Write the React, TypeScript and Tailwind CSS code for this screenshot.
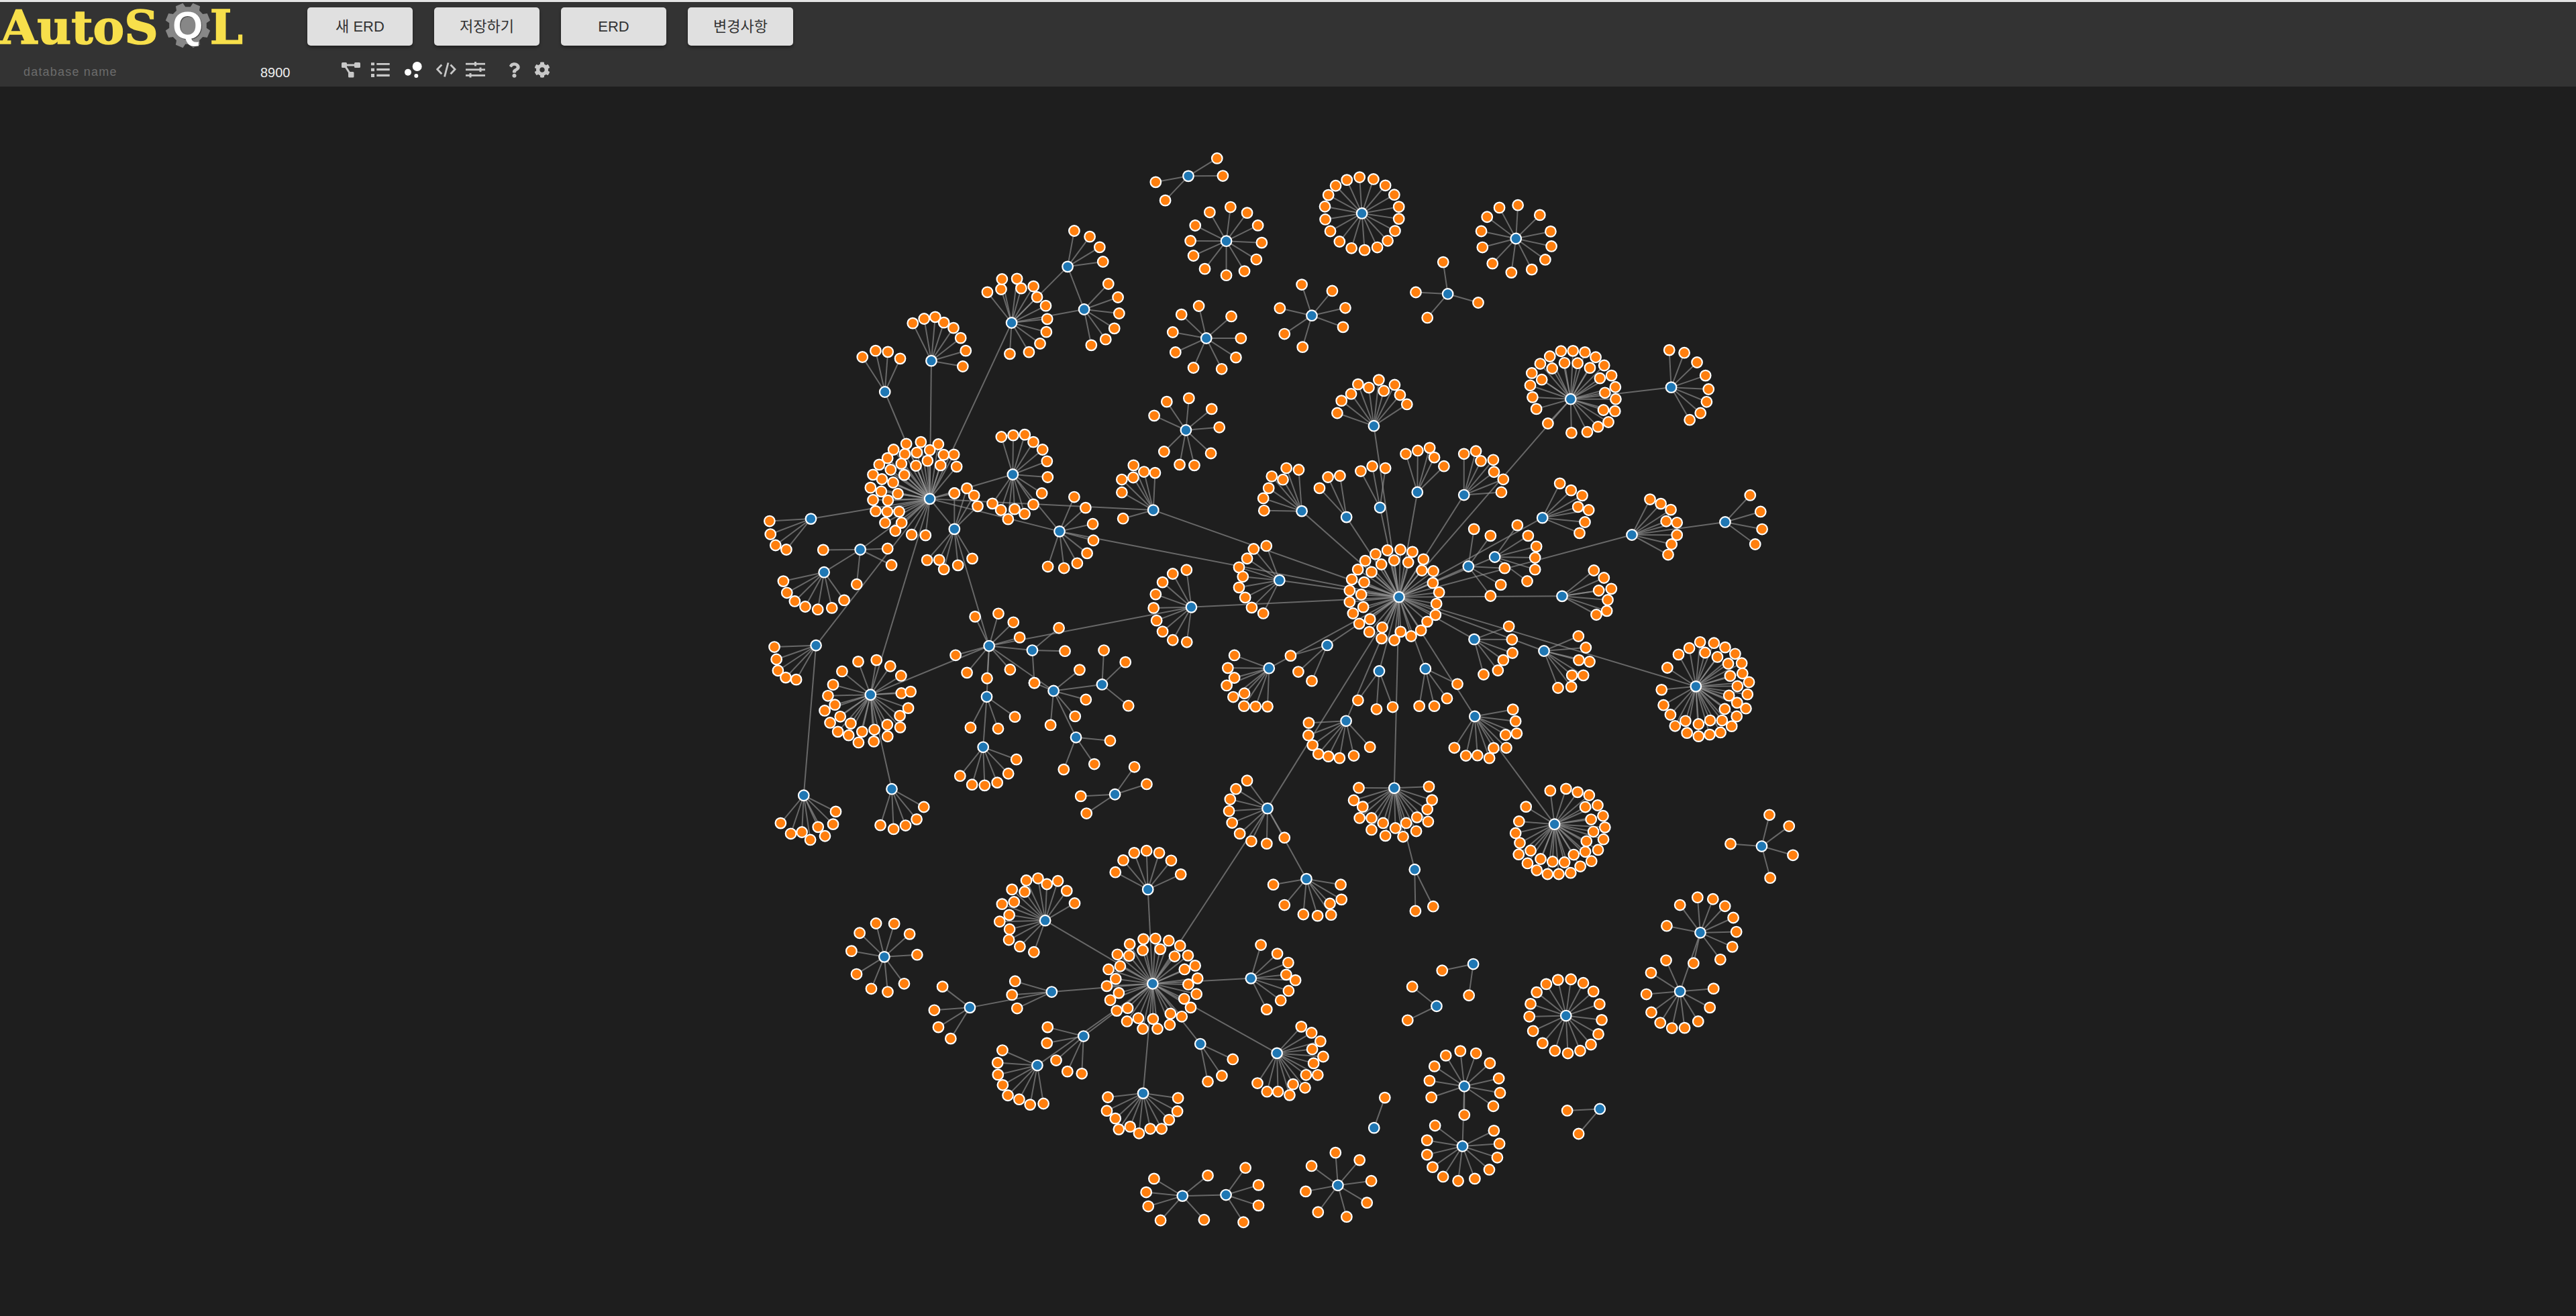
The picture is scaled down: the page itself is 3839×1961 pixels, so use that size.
import { FaCog, FaQuestion } from 'react-icons/fa';

type Pt = [number, number];

interface Hub {
  id: string;
  at: Pt;
  leaves: Pt[];
}

// crop frames: left, top, x scale, y scale
const frame = (ox: number, oy: number, sx: number, sy: number) => (x: number, y: number): Pt => [ox + x / sx, oy + y / sy];
type Frame = ReturnType<typeof frame>;

const A = frame(1100, 200, 2.24, 3);
const B = frame(1800, 200, 1.742, 2.45);
const C = frame(1100, 700, 2.24, 2.613);
const D = frame(1800, 840, 1.742, 2.8);
const E = frame(1200, 1240, 1.96, 2.529);
const F = frame(2000, 1200, 2.178, 2.376);
const G = frame(1270, 630, 3, 3);
const H = frame(1950, 790, 3, 3);
const I = frame(2120, 700, 3, 3);

const pts = (f: Frame, ...n: number[]): Pt[] => {
  const out: Pt[] = [];
  for (let i = 0; i < n.length; i += 2) out.push(f(n[i], n[i + 1]));
  return out;
};

const hubs: Hub[] = [
  { id: 'a1', at: A(1503, 187), leaves: [...pts(A, 1394, 214, 1426, 296), ...pts(B, 24, 88, 39, 152)] },
  { id: 'a2', at: A(1100, 592), leaves: pts(A, 1122, 432, 1174, 458, 1207, 505, 1218, 570) },
  { id: 'a3', at: A(913, 843), leaves: pts(A, 832, 706, 878, 693, 881, 648, 931, 646, 945, 689, 986, 680, 998, 728, 1027, 767, 1032, 826, 1029, 884, 1008, 936, 971, 974, 907, 982) },
  { id: 'a4', at: A(1155, 783), leaves: pts(A, 1236, 669, 1268, 729, 1272, 801, 1256, 868, 1227, 917, 1179, 943) },
  { id: 'a5', at: A(645, 1013), leaves: pts(A, 583, 845, 621, 825, 658, 817, 687, 842, 719, 866, 743, 911, 760, 968, 750, 1038) },
  { id: 'a6', at: A(490, 1152), leaves: pts(A, 415, 996, 459, 968, 500, 973, 541, 1003) },
  { id: 'a7', at: A(1563, 912), leaves: [...pts(A, 1480, 806, 1538, 768, 1451, 885, 1460, 975, 1520, 1044), ...pts(B, 61, 665, 86, 745, 73, 815, 36, 857)] },
  { id: 'a8', at: A(1495, 1323), leaves: [...pts(A, 1389, 1258, 1431, 1196, 1505, 1180, 1422, 1419, 1474, 1477, 1523, 1480), ...pts(B, 10, 1003, 30, 1070, 8, 1165)] },
  { id: 'a9', at: B(48, 390), leaves: [...pts(A, 1526, 408, 1510, 477, 1520, 543, 1558, 602), ...pts(B, 5, 285, 59, 266, 102, 287, 130, 333, 140, 396, 126, 457, 95, 500, 48, 515)] },

  { id: 'b1', at: B(400, 289), leaves: pts(B, 394, 157, 430, 164, 461, 187, 484, 221, 496, 265, 496, 309, 486, 353, 467, 389, 440, 413, 407, 423, 373, 416, 342, 392, 318, 354, 305, 311, 304, 264, 313, 222, 332, 188, 361, 167) },
  { id: 'b2', at: B(800, 381), leaves: pts(B, 805, 259, 862, 295, 890, 355, 892, 409, 876, 458, 841, 494, 788, 505, 739, 472, 713, 413, 710, 354, 725, 302, 757, 268) },
  { id: 'b3', at: B(270, 662), leaves: pts(B, 244, 549, 323, 572, 357, 634, 351, 704, 246, 777, 199, 729, 187, 635) },
  { id: 'b4', at: B(623, 583), leaves: pts(B, 611, 467, 540, 577, 702, 615, 570, 670) },
  { id: 'b5', at: B(942, 967), leaves: pts(B, 917, 792, 948, 791, 979, 796, 1007, 814, 1029, 844, 1048, 881, 1058, 923, 1059, 967, 1057, 1011, 1040, 1051, 1013, 1068, 985, 1087, 944, 1090, 883, 1056, 853, 1003, 843, 960, 837, 917, 841, 872, 863, 838, 888, 811, 926, 835, 960, 836, 992, 853, 1018, 891, 1031, 944, 1027, 1007, 894, 855, 867, 896) },
  { id: 'b6', at: B(1203, 924), leaves: pts(B, 1198, 788, 1237, 798, 1270, 833, 1292, 881, 1300, 931, 1295, 977, 1279, 1018, 1251, 1043) },
  { id: 'b7', at: B(431, 1065), leaves: pts(B, 336, 1018, 347, 973, 372, 948, 390, 913, 418, 925, 444, 897, 457, 937, 485, 915, 499, 952, 517, 986) },
  { id: 'b8', at: B(244, 1376), leaves: pts(B, 146, 1374, 144, 1329, 158, 1292, 166, 1249, 195, 1261, 204, 1219, 236, 1225) },
  { id: 'b9', at: B(360, 1398), leaves: pts(B, 290, 1292, 312, 1252, 343, 1247) },
  { id: 'b10', at: B(447, 1363), leaves: pts(B, 397, 1230, 427, 1212, 461, 1219) },
  { id: 'b11', at: B(544, 1307), leaves: pts(B, 514, 1167, 545, 1155, 576, 1145, 588, 1180, 613, 1212) },
  { id: 'b12', at: B(665, 1317), leaves: pts(B, 665, 1167, 696, 1157, 709, 1193, 741, 1189, 743, 1233, 767, 1260, 762, 1307) },
  { id: 'b13', at: B(1343, 1416), leaves: pts(B, 1408, 1318, 1435, 1378, 1439, 1442, 1421, 1497) },
  { id: 'i1', at: I(536, 215), leaves: pts(I, 614, 61, 664, 92, 714, 115, 695, 166, 743, 180, 726, 234, 702, 283) },
  { id: 'i2', at: I(936, 291), leaves: pts(B, 1148, 1333, 1176, 1349, 1202, 1371, 1190, 1413, 1218, 1418, 1218, 1463, 1204, 1497, 1195, 1535) },
  { id: 'i3', at: I(205, 432), leaves: pts(I, 230, 265, 304, 295, 367, 440, 350, 514, 304, 564) },
  { id: 'i4', at: I(323, 390), leaves: pts(I, 424, 248, 472, 295, 509, 343, 503, 393, 503, 446, 468, 498) },
  { id: 'i5', at: I(624, 565), leaves: pts(I, 766, 450, 811, 483, 788, 540, 844, 532, 828, 582, 824, 631, 777, 648) },
  { id: 'i6', at: I(231, 758), leaves: pts(I, 386, 700, 400, 759, 402, 819, 361, 851, 337, 897, 273, 915) },
  { id: 'i7', at: I(543, 810), leaves: pts(I, 697, 744, 730, 795, 699, 851, 747, 858, 668, 919, 719, 919, 665, 970, 606, 975) },

  { id: 'hc', at: H(405, 299), leaves: pts(H, 300, 107, 353, 90, 411, 87, 465, 97, 514, 130, 558, 183, 556, 236, 584, 278, 572, 329, 568, 379, 531, 409, 503, 448, 459, 474, 412, 454, 384, 492, 327, 484, 330, 435, 272, 455, 275, 398, 227, 418, 199, 372, 184, 321, 184, 270, 194, 220, 221, 176, 254, 137, 326, 153, 383, 135, 446, 144, 507, 180, 282, 187, 249, 233, 236, 288, 245, 344) },

  { id: 'd2', at: D(186, 69), leaves: [...pts(B, 152, 1503, 119, 1514, 102, 1549), ...pts(D, 81, 15, 91, 54, 81, 99, 97, 141, 114, 183, 144, 207)] },
  { id: 'd3', at: D(159, 436), leaves: pts(D, 69, 382, 52, 435, 69, 476, 49, 508, 66, 556, 95, 541, 94, 594, 124, 596, 155, 596) },
  { id: 'd4', at: D(310, 340), leaves: pts(D, 215, 384, 235, 451, 270, 489) },
  { id: 'd5', at: D(445, 448), leaves: pts(D, 390, 570, 438, 607, 480, 598) },
  { id: 'd6', at: D(565, 438), leaves: pts(D, 549, 594, 588, 594, 621, 562, 648, 502) },
  { id: 'd7', at: D(359, 656), leaves: pts(D, 262, 664, 261, 716, 272, 757, 287, 794, 313, 804, 342, 811, 379, 801, 421, 765) },
  { id: 'd8', at: D(693, 637), leaves: pts(D, 792, 608, 799, 657, 802, 708, 773, 714, 775, 768, 742, 769, 731, 811, 700, 800, 670, 801, 640, 768) },
  { id: 'd9', at: D(484, 936), leaves: pts(D, 392, 935, 574, 930, 582, 986, 379, 987, 402, 1014, 570, 1025, 394, 1061, 425, 1061, 543, 1058, 572, 1076, 455, 1082, 515, 1082, 487, 1103, 425, 1110, 541, 1116, 461, 1135, 507, 1139) },
  { id: 'd10', at: D(900, 1087), leaves: pts(D, 889, 947, 930, 939, 960, 953, 990, 966, 1012, 1008, 1026, 1052, 1031, 1100, 1027, 1150, 1013, 1194, 996, 1241, 967, 1263, 942, 1290, 911, 1295, 882, 1295, 854, 1279, 830, 1250, 807, 1213, 810, 1165, 799, 1124, 808, 1075, 826, 1014, 980, 1015, 995, 1067, 1001, 1118, 983, 1158, 980, 1202, 950, 1214, 926, 1246, 895, 1243, 864, 1232, 838, 1197) },
  { id: 'd11', at: D(155, 1021), leaves: pts(D, 102, 905, 73, 940, 58, 983, 55, 1032, 63, 1081, 83, 1126, 113, 1158, 153, 1168, 199, 1143) },
  { id: 'd12', at: D(256, 1315), leaves: pts(D, 170, 1339, 345, 1339, 347, 1401, 317, 1418, 199, 1424, 248, 1463, 285, 1469, 320, 1465) },
  { id: 'd13', at: D(537, 1276), leaves: pts(D, 539, 1449, 585, 1430) },
  { id: 'd14', at: D(1267, 512), leaves: pts(D, 1278, 327, 1314, 331, 1343, 349, 1369, 376, 1386, 415, 1388, 458, 1405, 494, 1401, 545, 1397, 604, 1373, 637, 1360, 678, 1331, 704, 1303, 713, 1274, 720, 1244, 706, 1213, 677, 1201, 630, 1183, 590, 1178, 526, 1193, 434, 1222, 379, 1250, 352, 1291, 371, 1323, 389, 1351, 417, 1356, 468, 1375, 511, 1353, 550, 1374, 580, 1342, 606, 1335, 654, 1304, 654, 1274, 669, 1240, 656) },
  { id: 'd15', at: D(1438, 1179), leaves: pts(D, 1458, 1048, 1509, 1095, 1519, 1216, 1460, 1311, 1357, 1169) },

  { id: 'f1', at: F(1163, 451), leaves: pts(F, 1054, 427, 1097, 353, 1154, 326, 1204, 332, 1243, 357, 1270, 398, 1280, 448, 1267, 501, 1228, 546, 1141, 559) },
  { id: 'f2', at: F(1097, 659), leaves: pts(F, 1052, 549, 1003, 593, 988, 669, 1004, 733, 1033, 770, 1071, 789, 1112, 788, 1156, 765, 1194, 716, 1206, 649) },
  { id: 'f3', at: F(727, 745), leaves: pts(F, 701, 618, 743, 616, 783, 629, 816, 659, 836, 704, 843, 760, 832, 810, 808, 847, 773, 869, 733, 878, 691, 869, 651, 842, 620, 799, 608, 748, 612, 703, 632, 662, 663, 633) },
  { id: 'f4', at: F(426, 562), leaves: pts(F, 325, 585, 412, 673) },
  { id: 'f5', at: F(307, 711), leaves: pts(F, 228, 642, 213, 761) },
  { id: 'f6', at: F(397, 995), leaves: pts(F, 384, 870, 435, 878, 480, 913, 509, 967, 513, 1018, 491, 1065, 290, 1034, 284, 975, 300, 924, 337, 886, 397, 1096) },
  { id: 'f7', at: F(391, 1207), leaves: pts(F, 302, 1134, 276, 1186, 276, 1237, 294, 1281, 328, 1315, 377, 1330, 431, 1322, 478, 1290, 504, 1247, 511, 1198, 493, 1152) },
  { id: 'f8', at: F(837, 1075), leaves: pts(F, 731, 1081, 768, 1163) },
  { id: 'f9', at: F(104, 1142), leaves: pts(F, 139, 1035) },

  { id: 'e0', at: E(1015, 571), leaves: pts(E, 988, 403, 1023, 401, 1062, 409, 1095, 428, 1118, 465, 1139, 503, 1146, 551, 1143, 610, 1126, 661, 1100, 695, 1065, 726, 1029, 741, 986, 741, 940, 713, 910, 673, 891, 633, 881, 580, 886, 517, 912, 461, 948, 422, 986, 445, 1037, 441, 1079, 468, 1108, 517, 1119, 574, 1107, 628, 1067, 684, 1016, 704, 973, 701, 942, 663, 916, 606, 907, 553, 920, 505, 946, 466) },
  { id: 'e1', at: E(1001, 216), leaves: pts(E, 906, 151, 929, 106, 961, 78, 997, 70, 1034, 78, 1069, 107, 1097, 159) },
  { id: 'e2', at: E(701, 333), leaves: pts(E, 787, 268, 764, 221, 738, 184, 706, 196, 680, 174, 646, 182, 641, 225, 604, 216, 610, 263, 575, 271, 596, 312, 568, 337, 597, 366, 595, 406, 627, 431, 668, 452) },
  { id: 'e3', at: E(231, 470), leaves: pts(E, 207, 344, 260, 345, 305, 384, 327, 462, 289, 571, 241, 602, 193, 590, 150, 535, 135, 448, 159, 380) },
  { id: 'e4', at: E(720, 602), leaves: pts(E, 613, 562, 604, 613, 619, 664) },
  { id: 'e5', at: E(481, 661), leaves: pts(E, 401, 582, 377, 671, 389, 735, 425, 778) },
  { id: 'e6', at: E(813, 769), leaves: pts(E, 708, 735, 706, 795, 733, 860, 766, 902, 808, 910) },
  { id: 'e7', at: E(678, 879), leaves: pts(E, 576, 822, 562, 869, 563, 914, 577, 953, 592, 992, 625, 1007, 657, 1027, 696, 1023) },
  { id: 'e8', at: E(1154, 798), leaves: pts(E, 1249, 856, 1217, 918, 1176, 940) },
  { id: 'e9', at: E(987, 984), leaves: pts(E, 884, 999, 1089, 1002, 1087, 1052, 881, 1050, 906, 1079, 1063, 1084, 916, 1120, 949, 1110, 1041, 1118, 1008, 1118, 975, 1135) },
  { id: 'e10', at: E(1302, 551), leaves: pts(E, 1331, 425, 1379, 458, 1411, 492, 1405, 537, 1432, 558, 1412, 598, 1389, 634, 1348, 668) },
  { id: 'e11', at: E(1378, 833), leaves: pts(E, 1449, 733, 1479, 756, 1505, 788, 1481, 818, 1513, 846, 1485, 871, 1463, 915, 1497, 915, 1460, 963, 1425, 950, 1415, 991, 1381, 978, 1349, 978, 1321, 946) },
  { id: 'e12', at: E(1102, 1371), leaves: pts(E, 1019, 1306, 996, 1357, 1002, 1410, 1038, 1463, 1165, 1461, 1176, 1294) },
  { id: 'e13', at: E(1229, 1367), leaves: pts(E, 1286, 1265, 1324, 1330, 1324, 1407, 1280, 1470) },
  { id: 'e14', at: E(1556, 1331), leaves: [...pts(E, 1549, 1208, 1479, 1258, 1462, 1354, 1498, 1432), ...pts(F, 57, 1256, 95, 1330, 81, 1407, 15, 1457)] },

  { id: 'g0', at: G(347, 340), leaves: pts(G, 242, 94, 307, 86, 385, 96, 455, 142, 467, 196, 409, 143, 347, 122, 289, 133, 235, 140, 185, 120, 158, 158, 121, 187, 93, 232, 82, 290, 93, 345, 105, 395, 147, 447, 193, 483, 221, 447, 210, 397, 157, 397, 160, 347, 130, 307, 133, 252, 172, 210, 220, 183, 285, 192, 337, 170, 395, 190, 233, 233, 183, 267, 204, 317, 266, 500, 328, 503, 457, 315) },
  { id: 'g1', at: G(718, 231), leaves: pts(G, 667, 63, 720, 56, 772, 53, 810, 86, 851, 120, 871, 172, 874, 243, 848, 315, 810, 365, 771, 407, 726, 386, 697, 431, 665, 390, 627, 361) },
  { id: 'g2', at: G(457, 475), leaves: pts(G, 457, 315, 513, 293, 545, 325, 561, 373, 335, 614, 389, 613, 410, 655, 473, 637, 537, 607) },

  { id: 'c1', at: C(1386, 157), leaves: [...pts(A, 1320, 1480), ...pts(C, 1319, 30, 1355, 8, 1392, 12, 1281, 38, 1281, 88, 1285, 190)] },
  { id: 'c2', at: C(1073, 240), leaves: pts(C, 1122, 106, 1160, 148, 1184, 211, 1186, 275, 1165, 325, 1132, 364, 1088, 383, 1034, 377) },
  { id: 'c3', at: C(243, 191), leaves: pts(C, 105, 200, 108, 251, 125, 294, 161, 311) },
  { id: 'c4', at: C(408, 311), leaves: pts(C, 284, 312, 499, 307, 512, 371, 396, 446) },
  { id: 'c5', at: C(287, 399), leaves: pts(C, 151, 434, 163, 479, 189, 512, 224, 533, 266, 544, 313, 538, 354, 508) },
  { id: 'c6', at: C(260, 684), leaves: pts(C, 121, 690, 128, 738, 133, 782, 159, 809, 194, 817) },
  { id: 'c7', at: C(219, 1268), leaves: pts(C, 142, 1376, 176, 1417, 213, 1411, 241, 1441, 290, 1426, 267, 1391, 317, 1380, 326, 1331) },
  { id: 'c8', at: C(442, 876), leaves: pts(C, 401, 747, 462, 741, 508, 765, 544, 802, 545, 870, 576, 864, 568, 928, 540, 958, 541, 1003, 498, 993, 499, 1038, 455, 1012, 453, 1058, 414, 1020, 402, 1062, 369, 1034, 376, 988, 333, 1020, 307, 985, 341, 961, 289, 938, 323, 915, 300, 880, 317, 837, 347, 785) },
  { id: 'c9', at: C(513, 1243), leaves: pts(C, 620, 1313, 596, 1361, 559, 1385, 519, 1399, 475, 1384) },
  { id: 'c10', at: C(838, 686), leaves: pts(C, 791, 572, 869, 560, 919, 594, 940, 653, 726, 722, 764, 790, 831, 812, 908, 778) },
  { id: 'c11', at: C(1513, 535), leaves: pts(C, 1497, 390, 1451, 405, 1417, 438, 1394, 485, 1387, 538, 1397, 587, 1417, 630, 1451, 663, 1498, 671) },
  { id: 'c12', at: C(982, 703), leaves: pts(C, 1071, 616, 1091, 706, 989, 830) },
  { id: 'c13', at: C(1053, 861), leaves: pts(C, 1140, 779, 1161, 895, 1125, 960, 1043, 994, 989, 830) },
  { id: 'c14', at: C(1215, 836), leaves: pts(C, 1221, 703, 1293, 749, 1303, 919) },
  { id: 'c15', at: C(1128, 1042), leaves: pts(C, 1242, 1055, 1189, 1146, 1087, 1167) },
  { id: 'c16', at: C(830, 884), leaves: pts(C, 924, 962, 868, 1008, 776, 1004) },
  { id: 'c17', at: C(818, 1080), leaves: pts(C, 929, 1128, 902, 1183, 865, 1218, 823, 1229, 781, 1226, 741, 1192) },
  { id: 'c18', at: C(1258, 1264), leaves: pts(C, 1323, 1157, 1364, 1224, 1144, 1271, 1163, 1338) },
];

const hubLinks: [string, string][] = [
  ['a2', 'a3'], ['a2', 'a4'], ['a3', 'a4'], ['a3', 'g0'], ['a5', 'g0'], ['a6', 'g0'],
  ['g0', 'g1'], ['g0', 'g2'], ['g0', 'c1'], ['g0', 'c2'], ['g1', 'c2'], ['g0', 'c3'], ['g0', 'c4'], ['c4', 'c5'],
  ['g0', 'c6'], ['c6', 'c7'], ['g0', 'c8'], ['c8', 'c9'], ['c8', 'c10'], ['g2', 'c10'], ['c10', 'c11'],
  ['c10', 'c12'], ['c10', 'c13'], ['c13', 'c14'], ['c13', 'c15'], ['c10', 'c16'], ['c16', 'c17'],
  ['hc', 'c1'], ['hc', 'c2'], ['hc', 'c11'], ['hc', 'b5'], ['b5', 'b6'], ['hc', 'b7'], ['hc', 'b8'], ['hc', 'b9'],
  ['hc', 'b10'], ['hc', 'b11'], ['hc', 'b12'], ['hc', 'i1'], ['hc', 'i2'], ['i2', 'b13'], ['hc', 'i3'], ['hc', 'i4'],
  ['hc', 'i5'], ['hc', 'i6'], ['hc', 'i7'], ['hc', 'd14'], ['hc', 'd2'], ['hc', 'd3'], ['hc', 'd4'], ['hc', 'd5'],
  ['hc', 'd6'], ['hc', 'd7'], ['hc', 'd8'], ['hc', 'd9'], ['hc', 'd11'], ['d8', 'd10'], ['d9', 'd13'], ['d11', 'd12'],
  ['d11', 'e0'], ['e0', 'e1'], ['e0', 'e2'], ['e0', 'e4'], ['e4', 'e5'], ['e0', 'e6'], ['e0', 'e7'], ['e0', 'e8'],
  ['e0', 'e9'], ['e0', 'e10'], ['e0', 'e11'], ['e12', 'e13'], ['f1', 'f2'], ['f6', 'f7'],
];

const hubAt = (id: string): Pt => hubs.find((h) => h.id === id)!.at;

// 8 tooth cog around 0,0 for the logo
function cogPath(outer: number, inner: number) {
  const parts: string[] = [];
  for (let i = 0; i < 8; i++) {
    const a = (i * Math.PI) / 4 + Math.PI / 8;
    [[-0.26, inner], [-0.17, outer], [0.17, outer], [0.26, inner]].forEach(([da, r], j) => {
      const x = (r * Math.cos(a + da)).toFixed(1);
      const y = (r * Math.sin(a + da)).toFixed(1);
      parts.push(`${i === 0 && j === 0 ? 'M' : 'L'}${x} ${y}`);
    });
  }
  return parts.join(' ') + ' Z';
}

function Logo() {
  return (
    <div className="flex w-[458px] shrink-0 items-start font-['DejaVu_Serif',serif] text-[70px] leading-[70px] font-bold text-[#f7df4b] [-webkit-text-stroke:1.5px_#f7df4b]">
      <span className="mt-[3px] ml-[1px]">AutoS</span>
      <div className="relative ml-[9px] h-[70px] w-[70px] shrink-0">
        <svg viewBox="-35 -35 70 70" className="h-[70px] w-[70px]">
          <path d={cogPath(34, 28)} fill="#878787" />
        </svg>
        <span className="absolute inset-0 flex items-center justify-center font-['Liberation_Sans',sans-serif] text-[58px] leading-none font-bold text-white [-webkit-text-stroke:0px] [text-shadow:1px_1px_1px_#444]">
          Q
        </span>
      </div>
      <span className="mt-[3px] -ml-[2px]">L</span>
    </div>
  );
}

function TreeIcon() {
  return (
    <svg viewBox="0 0 30 24" className="h-6 w-[30px] text-[#c8c8c8]" fill="currentColor">
      <rect x="1" y="1" width="8" height="8" rx="1.5" />
      <rect x="20" y="1" width="9" height="8" rx="1.5" />
      <rect x="11" y="15" width="8.5" height="8.5" rx="1.5" />
      <path d="M8 3.5h13v3H8z" />
      <path d="M5 7l2.5-1.5 7 11-2.5 1.5z" />
    </svg>
  );
}

function ListIcon() {
  return (
    <svg viewBox="0 0 29 24" className="h-6 w-[29px] text-[#c8c8c8]" fill="currentColor">
      <rect x="0" y="1.3" width="5" height="4" />
      <rect x="0" y="9.7" width="5" height="4.5" />
      <rect x="0" y="18" width="5" height="5" />
      <rect x="8.3" y="2" width="19.4" height="2.8" />
      <rect x="8.3" y="10" width="19.4" height="3.2" />
      <rect x="8.3" y="18.7" width="19.4" height="3.3" />
    </svg>
  );
}

function BubblesIcon() {
  return (
    <svg viewBox="0 0 27 24" className="h-6 w-[27px] text-white" fill="currentColor">
      <circle cx="18.7" cy="7" r="7" />
      <circle cx="5" cy="15.7" r="5" />
      <circle cx="17.3" cy="21" r="3" />
    </svg>
  );
}

function CodeIcon() {
  return (
    <svg viewBox="0 0 30 24" className="h-6 w-[30px] text-[#c8c8c8]" fill="none" stroke="currentColor" strokeWidth="2.8">
      <path d="M8.3 4.5 1.7 11.3l6.6 6.9" />
      <path d="M18 1.5 12.5 22.3" />
      <path d="M21.5 4.5l6.6 6.8-6.6 6.9" />
    </svg>
  );
}

function SlidersIcon() {
  return (
    <svg viewBox="0 0 30 24" className="h-6 w-[30px] text-[#c8c8c8]" fill="currentColor">
      <rect x="0" y="1.8" width="29" height="2.8" />
      <rect x="0" y="10.4" width="29" height="2.8" />
      <rect x="0" y="19" width="29" height="2.8" />
      <rect x="13" y="0" width="3" height="6.5" />
      <rect x="20.5" y="8.5" width="3" height="6.5" />
      <rect x="5.5" y="17" width="3" height="6.5" />
    </svg>
  );
}

function Toolbar() {
  return (
    <div className="flex h-6 items-center">
      <TreeIcon />
      <div className="ml-[15px]">
        <ListIcon />
      </div>
      <div className="ml-[21px]">
        <BubblesIcon />
      </div>
      <div className="ml-[20px]">
        <CodeIcon />
      </div>
      <div className="ml-[14px]">
        <SlidersIcon />
      </div>
      <FaQuestion className="ml-[34px] h-[23px] w-[17px] text-[#c8c8c8]" />
      <FaCog className="ml-[21px] h-[24px] w-[24px] text-[#c8c8c8]" />
    </div>
  );
}

function ActionButton({ label }: { label: string }) {
  return (
    <button className="h-[57px] w-[157px] rounded-[5px] bg-[#e0e0e0] text-[22px] text-[#333] shadow-[0_3px_4px_rgba(0,0,0,0.35)]">
      {label}
    </button>
  );
}

function Graph() {
  return (
    <svg viewBox="0 129 3839 1832" className="h-[1832px] w-[3839px]">
      <g stroke="#999" strokeOpacity="0.6" strokeWidth="2">
        {hubLinks.map(([a, b]) => {
          const p = hubAt(a);
          const q = hubAt(b);
          return <line key={a + b} x1={p[0]} y1={p[1]} x2={q[0]} y2={q[1]} />;
        })}
        {hubs.map((h) =>
          h.leaves.map((l, i) => <line key={h.id + i} x1={h.at[0]} y1={h.at[1]} x2={l[0]} y2={l[1]} />),
        )}
      </g>
      <g stroke="#fff" strokeWidth="2.2">
        {hubs.map((h) =>
          h.leaves.map((l, i) => <circle key={h.id + i} cx={l[0]} cy={l[1]} r="7.8" fill="#ff7f0e" />),
        )}
        {hubs.map((h) => (
          <circle key={h.id} cx={h.at[0]} cy={h.at[1]} r="7.8" fill="#1f77b4" />
        ))}
      </g>
    </svg>
  );
}

export default function App() {
  return (
    <div className="flex h-[1961px] w-full flex-col overflow-hidden bg-[#1e1e1e] font-['Liberation_Sans','Noto_Sans_CJK_KR',sans-serif]">
      <header className="h-[129px] shrink-0 border-t-[3px] border-[#e4e4e4] bg-[#333]">
        <div className="flex h-[77px] items-start">
          <Logo />
          <div className="mt-[8px] flex gap-[32px]">
            <ActionButton label="새 ERD" />
            <ActionButton label="저장하기" />
            <ActionButton label="ERD" />
            <ActionButton label="변경사항" />
          </div>
        </div>
        <div className="mt-[12px] flex items-start">
          <span className="mt-[2px] ml-[35px] w-[353px] text-[18px] tracking-[1.2px] text-[#6b6b6b]">database name</span>
          <span className="mt-[1px] w-[120px] text-[20px] text-[#eee]">8900</span>
          <Toolbar />
        </div>
      </header>
      <Graph />
    </div>
  );
}
